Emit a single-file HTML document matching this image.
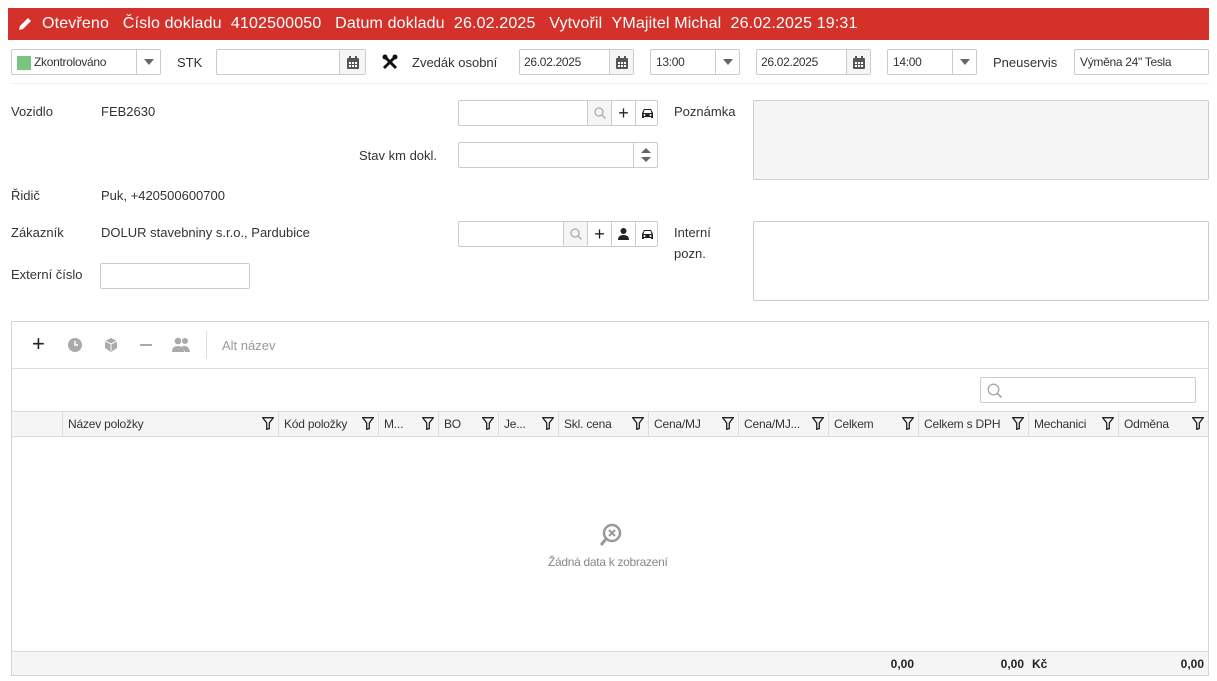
<!DOCTYPE html>
<html><head><meta charset="utf-8"><style>
*{box-sizing:border-box;margin:0;padding:0}
body{width:1217px;height:681px;background:#fff;position:relative;overflow:hidden;font-family:"Liberation Sans",sans-serif;color:#333;font-size:13px}
.a{position:absolute}
.box{position:absolute;border:1px solid #ccc;background:#fff;border-radius:2px}
.t{position:absolute;font-size:13px;color:#333;white-space:nowrap}
.s{font-size:12px;letter-spacing:-0.3px}
.btn{position:absolute;top:0;bottom:0;border-left:1px solid #ccc;display:flex;align-items:center;justify-content:center}
.th{position:absolute;top:0;height:25px;border-left:1px solid #ddd;font-size:12px;line-height:25px;padding-left:5px;color:#333;white-space:nowrap;letter-spacing:-0.2px}
</style></head><body>
<div class="a" style="left:8px;top:8px;width:1201px;height:32px;background:#d3312a;color:#fff;font-size:16px;line-height:32px;white-space:nowrap">
<svg class="a" style="left:9px;top:8px" width="16" height="16" viewBox="0 0 16 16"><path d="M2 14l1-4 8-8 3 3-8 8z" fill="#fff"/></svg>
<span class="a" style="left:34px;letter-spacing:0.15px">Otevřeno&nbsp;&nbsp;&nbsp;Číslo dokladu&nbsp;&nbsp;4102500050&nbsp;&nbsp;&nbsp;Datum dokladu&nbsp;&nbsp;26.02.2025&nbsp;&nbsp;&nbsp;Vytvořil&nbsp;&nbsp;YMajitel Michal&nbsp;&nbsp;26.02.2025 19:31</span>
</div>
<div class="box" style="left:11px;top:49px;width:150px;height:26px">
<div class="a" style="left:5px;top:6px;width:14px;height:14px;background:#7bc47f"></div>
<span class="t s" style="left:22px;top:5px">Zkontrolováno</span>
<div class="btn" style="left:124px;right:0"><svg width="10" height="6"><path d="M0 0h10L5 6z" fill="#666"/></svg></div></div>
<span class="t" style="left:177px;top:55px">STK</span>
<div class="box" style="left:216px;top:49px;width:150px;height:26px"><div class="btn" style="left:122px;right:0;background:#f5f5f5"><svg width="12" height="13" viewBox="0 0 12 13"><rect x="0" y="2" width="12" height="11" rx="1" fill="#555"/><rect x="2" y="0" width="2" height="3" fill="#555"/><rect x="8" y="0" width="2" height="3" fill="#555"/><g fill="#fff"><rect x="2" y="6" width="2" height="2"/><rect x="5" y="6" width="2" height="2"/><rect x="8" y="6" width="2" height="2"/><rect x="2" y="9" width="2" height="2"/><rect x="5" y="9" width="2" height="2"/><rect x="8" y="9" width="2" height="2"/></g></svg></div></div>
<svg class="a" style="left:382px;top:54px" width="16" height="16" viewBox="0 0 16 16"><path d="M2 2l12 12M14 2L2 14" stroke="#111" stroke-width="3"/><circle cx="3" cy="3" r="2.5" fill="#111"/><circle cx="13" cy="3" r="2.5" fill="#111"/></svg>
<span class="t" style="left:412px;top:55px">Zvedák osobní</span>
<div class="box" style="left:519px;top:49px;width:115px;height:26px"><span class="t s" style="left:4px;top:5px">26.02.2025</span><div class="btn" style="left:89px;right:0;background:#f5f5f5"><svg width="12" height="13" viewBox="0 0 12 13"><rect x="0" y="2" width="12" height="11" rx="1" fill="#555"/><rect x="2" y="0" width="2" height="3" fill="#555"/><rect x="8" y="0" width="2" height="3" fill="#555"/><g fill="#fff"><rect x="2" y="6" width="2" height="2"/><rect x="5" y="6" width="2" height="2"/><rect x="8" y="6" width="2" height="2"/><rect x="2" y="9" width="2" height="2"/><rect x="5" y="9" width="2" height="2"/><rect x="8" y="9" width="2" height="2"/></g></svg></div></div>
<div class="box" style="left:650px;top:49px;width:90px;height:26px"><span class="t s" style="left:5px;top:5px">13:00</span><div class="btn" style="left:64px;right:0"><svg width="10" height="6"><path d="M0 0h10L5 6z" fill="#666"/></svg></div></div>
<div class="box" style="left:756px;top:49px;width:115px;height:26px"><span class="t s" style="left:4px;top:5px">26.02.2025</span><div class="btn" style="left:89px;right:0;background:#f5f5f5"><svg width="12" height="13" viewBox="0 0 12 13"><rect x="0" y="2" width="12" height="11" rx="1" fill="#555"/><rect x="2" y="0" width="2" height="3" fill="#555"/><rect x="8" y="0" width="2" height="3" fill="#555"/><g fill="#fff"><rect x="2" y="6" width="2" height="2"/><rect x="5" y="6" width="2" height="2"/><rect x="8" y="6" width="2" height="2"/><rect x="2" y="9" width="2" height="2"/><rect x="5" y="9" width="2" height="2"/><rect x="8" y="9" width="2" height="2"/></g></svg></div></div>
<div class="box" style="left:887px;top:49px;width:90px;height:26px"><span class="t s" style="left:5px;top:5px">14:00</span><div class="btn" style="left:64px;right:0"><svg width="10" height="6"><path d="M0 0h10L5 6z" fill="#666"/></svg></div></div>
<span class="t" style="left:993px;top:55px">Pneuservis</span>
<div class="box" style="left:1074px;top:49px;width:135px;height:26px"><span class="t s" style="left:5px;top:5px">Výměna 24" Tesla</span></div>
<div class="a" style="left:11px;top:83px;width:1198px;height:1px;background:#eee"></div>
<span class="t" style="left:11px;top:104px">Vozidlo</span><span class="t" style="left:101px;top:104px">FEB2630</span>
<div class="box" style="left:458px;top:100px;width:200px;height:26px">
<div class="btn" style="left:128px;width:24px;background:#f5f5f5"><svg width="12" height="12"><circle cx="5" cy="5" r="4" fill="none" stroke="#aaa" stroke-width="1.3"/><path d="M8 8l3.5 3.5" stroke="#aaa" stroke-width="1.3"/></svg></div>
<div class="btn" style="left:152px;width:24px;font-size:18px;color:#222">+</div>
<div class="btn" style="left:176px;width:23px"><svg width="13" height="11" viewBox="0 0 13 11"><path d="M1 5l2-4h7l2 4v5h-2v-1H3v1H1z" fill="#222"/><path d="M3.5 2h6l1 3h-8z" fill="#fff"/><circle cx="3.5" cy="7" r="1" fill="#fff"/><circle cx="9.5" cy="7" r="1" fill="#fff"/></svg></div></div>
<span class="t" style="left:359px;top:148px">Stav km dokl.</span>
<div class="box" style="left:458px;top:142px;width:200px;height:26px"><div class="btn" style="left:174px;right:0;flex-direction:column;gap:4px"><svg width="10" height="5"><path d="M0 5h10L5 0z" fill="#666"/></svg><svg width="10" height="5"><path d="M0 0h10L5 5z" fill="#666"/></svg></div></div>
<span class="t" style="left:674px;top:104px">Poznámka</span>
<div class="box" style="left:753px;top:100px;width:456px;height:80px;background:#f5f5f5"></div>
<span class="t" style="left:11px;top:188px">Řidič</span><span class="t" style="left:101px;top:188px">Puk, +420500600700</span>
<span class="t" style="left:11px;top:225px">Zákazník</span><span class="t" style="left:101px;top:225px">DOLUR stavebniny s.r.o., Pardubice</span>
<div class="box" style="left:458px;top:221px;width:200px;height:26px">
<div class="btn" style="left:104px;width:24px;background:#f5f5f5"><svg width="12" height="12"><circle cx="5" cy="5" r="4" fill="none" stroke="#aaa" stroke-width="1.3"/><path d="M8 8l3.5 3.5" stroke="#aaa" stroke-width="1.3"/></svg></div>
<div class="btn" style="left:128px;width:24px;font-size:18px;color:#222">+</div>
<div class="btn" style="left:152px;width:24px"><svg width="11" height="12"><circle cx="5.5" cy="3" r="3" fill="#222"/><path d="M0 12q0-5 5.5-5t5.5 5z" fill="#222"/></svg></div>
<div class="btn" style="left:176px;width:23px"><svg width="13" height="11" viewBox="0 0 13 11"><path d="M1 5l2-4h7l2 4v5h-2v-1H3v1H1z" fill="#222"/><path d="M3.5 2h6l1 3h-8z" fill="#fff"/><circle cx="3.5" cy="7" r="1" fill="#fff"/><circle cx="9.5" cy="7" r="1" fill="#fff"/></svg></div></div>
<span class="t" style="left:674px;top:225px">Interní</span><span class="t" style="left:674px;top:246px">pozn.</span>
<div class="box" style="left:753px;top:221px;width:456px;height:80px"></div>
<span class="t" style="left:11px;top:267px">Externí číslo</span>
<div class="box" style="left:100px;top:263px;width:150px;height:26px"></div>
<div class="a" style="left:11px;top:321px;width:1198px;height:355px;border:1px solid #d4d4d4"></div>
<span class="a" style="left:32px;top:333px;font-size:22px;color:#222;line-height:22px">+</span>
<svg class="a" style="left:68px;top:338px" width="14" height="14"><circle cx="7" cy="7" r="7" fill="#aaa"/><path d="M7 3v4h3" stroke="#fff" stroke-width="1.5" fill="none"/></svg>
<svg class="a" style="left:104px;top:338px" width="14" height="14" viewBox="0 0 14 14"><path d="M7 0l6 3v7l-6 4-6-4V3z" fill="#aaa"/><path d="M7 6v7M1 3l6 3 6-3" stroke="#fff" fill="none"/></svg>
<div class="a" style="left:140px;top:344px;width:12px;height:2px;background:#aaa"></div>
<svg class="a" style="left:172px;top:337px" width="18" height="15"><circle cx="6" cy="4" r="3.3" fill="#aaa"/><circle cx="13" cy="4" r="3" fill="#aaa"/><path d="M0 15q0-6 6-6t6 6zM10 9q7-1 8 6h-5z" fill="#aaa"/></svg>
<div class="a" style="left:206px;top:331px;width:1px;height:28px;background:#ddd"></div>
<span class="t" style="left:222px;top:338px;color:#999">Alt název</span>
<div class="a" style="left:12px;top:368px;width:1196px;height:1px;background:#ddd"></div>
<div class="box" style="left:980px;top:377px;width:216px;height:26px"><svg class="a" style="left:6px;top:5px" width="16" height="16"><circle cx="6.5" cy="6.5" r="5.3" fill="none" stroke="#aaa" stroke-width="1.4"/><path d="M10.5 10.5l4 4" stroke="#aaa" stroke-width="1.6"/></svg></div>
<div class="a" style="left:12px;top:411px;width:1196px;height:26px;background:#f5f5f5;border-top:1px solid #ddd;border-bottom:1px solid #ddd">
<div class="th" style="left:50px;width:216px">Název položky</div>
<div class="th" style="left:266px;width:100px">Kód položky</div>
<div class="th" style="left:366px;width:60px">M...</div>
<div class="th" style="left:426px;width:60px">BO</div>
<div class="th" style="left:486px;width:60px">Je...</div>
<div class="th" style="left:546px;width:90px">Skl. cena</div>
<div class="th" style="left:636px;width:90px">Cena/MJ</div>
<div class="th" style="left:726px;width:90px">Cena/MJ...</div>
<div class="th" style="left:816px;width:90px">Celkem</div>
<div class="th" style="left:906px;width:110px">Celkem s DPH</div>
<div class="th" style="left:1016px;width:90px">Mechanici</div>
<div class="th" style="left:1106px;width:90px">Odměna</div>
</div>
<script>
[278,378,438,498,558,648,738,828,918,1028,1118,1208].forEach(function(x){var d=document.createElement('div');d.innerHTML='<svg width="12" height="13" viewBox="0 0 12 13"><path d="M0.7 0.7h10.6L7.3 6v5.5L4.7 12.3V6z" fill="none" stroke="#222" stroke-width="1.3"/></svg>';d.className='a';d.style.left=(x-16)+'px';d.style.top='417px';document.body.appendChild(d);});
</script>
<svg class="a" style="left:599px;top:523px" width="24" height="24" viewBox="0 0 24 24"><circle cx="13" cy="10" r="8" fill="none" stroke="#999" stroke-width="2.5"/><path d="M7 16l-5 6" stroke="#999" stroke-width="3"/><path d="M10 7l6 6M16 7l-6 6" stroke="#999" stroke-width="2"/></svg>
<span class="t" style="left:548px;top:555px;font-size:12px;color:#888;letter-spacing:-0.3px">Žádná data k zobrazení</span>
<div class="a" style="left:12px;top:651px;width:1196px;height:24px;background:#f5f5f5;border-top:1px solid #ddd;font-weight:bold;font-size:12px;color:#222">
<span class="a" style="right:294px;top:5px">0,00</span>
<span class="a" style="right:184px;top:5px">0,00</span>
<span class="a" style="left:1020px;top:5px">Kč</span>
<span class="a" style="right:4px;top:5px">0,00</span>
</div>
</body></html>
